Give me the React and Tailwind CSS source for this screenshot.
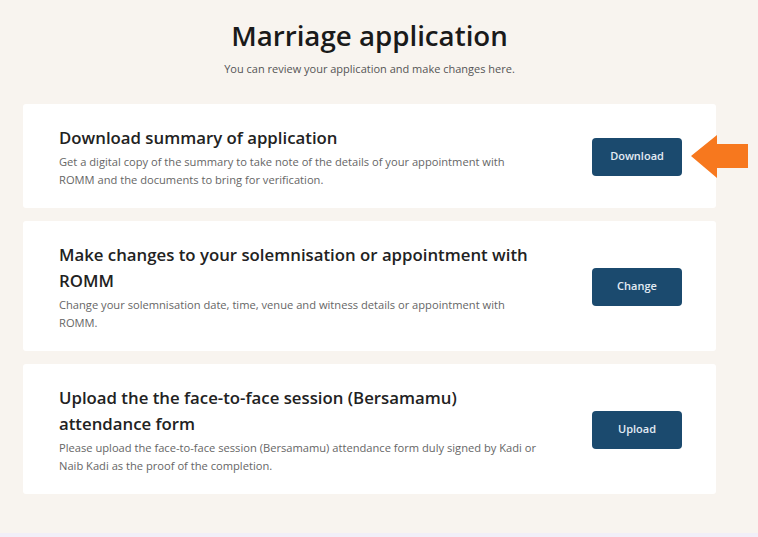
import React from 'react';

const items = [
  {
    title: ['Download summary of application'],
    text: [
      'Get a digital copy of the summary to take note of the details of your appointment with',
      'ROMM and the documents to bring for verification.',
    ],
    action: 'Download',
  },
  {
    title: ['Make changes to your solemnisation or appointment with', 'ROMM'],
    text: ['Change your solemnisation date, time, venue and witness details or appointment with', 'ROMM.'],
    action: 'Change',
  },
  {
    title: ['Upload the the face-to-face session (Bersamamu)', 'attendance form'],
    text: [
      'Please upload the face-to-face session (Bersamamu) attendance form duly signed by Kadi or',
      'Naib Kadi as the proof of the completion.',
    ],
    action: 'Upload',
  },
];

function Card({ title, text, action }) {
  return (
    <div className="flex items-center justify-between bg-white rounded-[3px] pl-[36px] pr-[34px] pt-[21px] pb-[20px]">
      <div className="w-[500px] whitespace-nowrap">
        <h2 className="text-[16.8px] leading-[26px] font-semibold text-[#222]">
          {title.map((l) => (
            <span key={l} className="block">{l}</span>
          ))}
        </h2>
        <p className="mt-[2px] text-[11.15px] leading-[17.5px] text-[#666]">
          {text.map((l) => (
            <span key={l} className="block">{l}</span>
          ))}
        </p>
      </div>
      <button className="w-[90px] h-[38px] rounded-[4px] bg-[#1b4a6e] text-[11px] font-semibold text-[#e3ecf4]">
        {action}
      </button>
    </div>
  );
}

export default function App() {
  return (
    <div className="relative h-[537px] flex flex-col bg-[#f8f4ef] font-['Open_Sans',sans-serif]">
      <div className="ml-[23px] w-[693px] pt-[16px] text-center">
        <h1 className="text-[27.7px] leading-[38px] font-semibold text-[#1a1a1a]">Marriage application</h1>
        <p className="mt-[8px] text-[11px] leading-[14px] text-[#555]">
          You can review your application and make changes here.
        </p>
      </div>
      <div className="ml-[23px] w-[693px] mt-[28px] flex flex-col gap-[13px]">
        {items.map((it) => (
          <Card key={it.action} {...it} />
        ))}
      </div>
      <div className="flex-1" />
      <div className="h-[4px] bg-[#f1eff8]" />
      <svg className="absolute left-[691px] top-[135px]" width="58" height="44" viewBox="0 0 58 44">
        <polygon points="0,21 26,0 26,9 57,9 57,33 26,33 26,43" fill="#f7781e" />
      </svg>
    </div>
  );
}
